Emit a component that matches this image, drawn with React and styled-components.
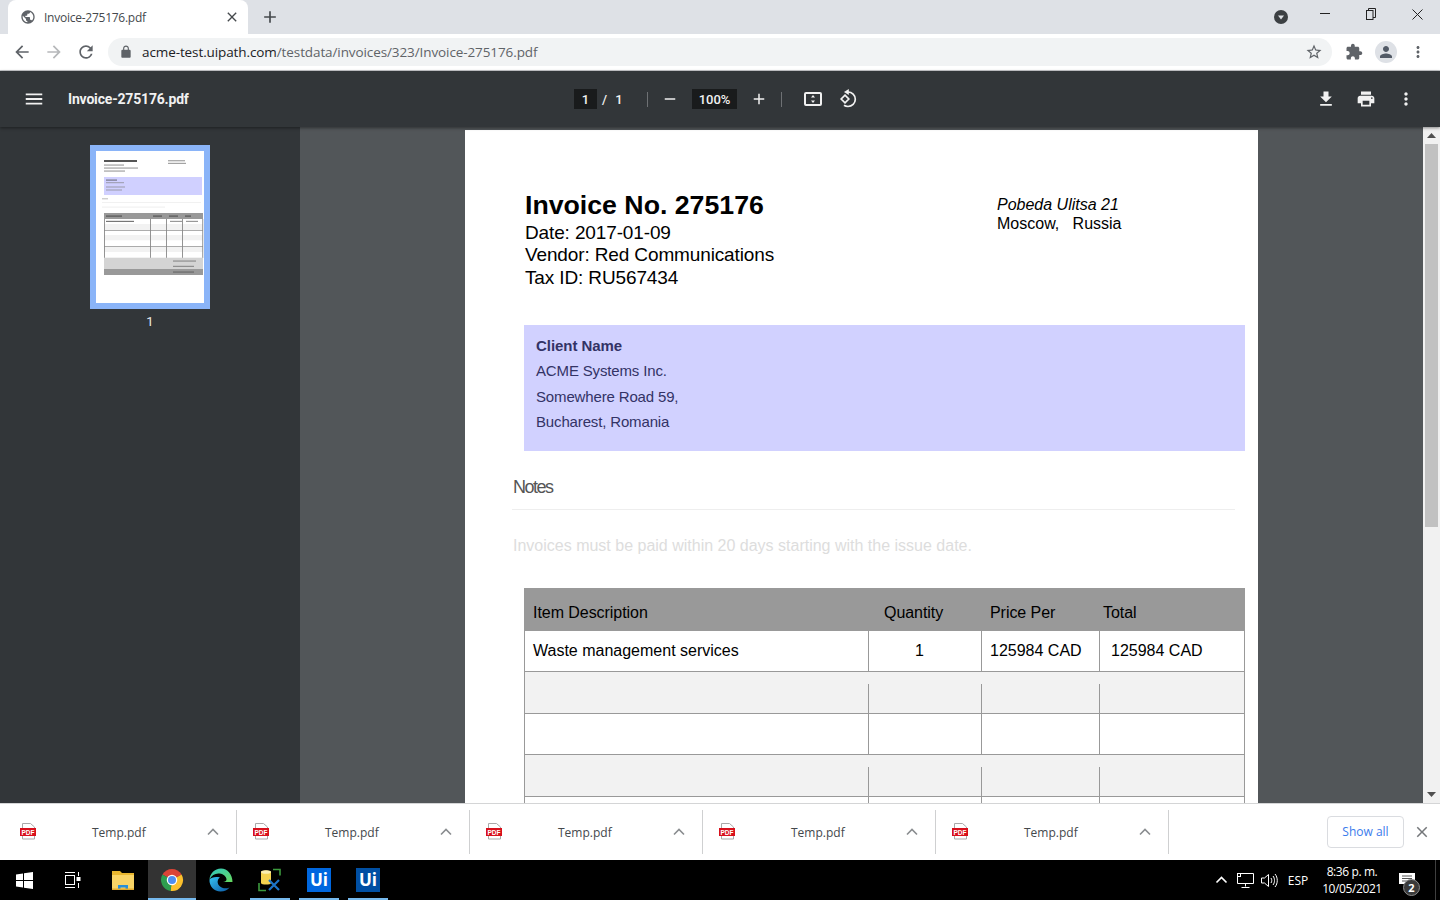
import React from 'react'
import styled, { createGlobalStyle } from 'styled-components'

const GlobalStyle = createGlobalStyle`
  html, body { margin: 0; padding: 0; background: #fff; }
  * { box-sizing: border-box; }
  svg { flex: none; }
`

const Screen = styled.div`
  width: 1440px;
  height: 900px;
  display: flex;
  flex-direction: column;
  overflow: hidden;
  font-family: "Open Sans", "Noto Sans", sans-serif;
`

/* browser chrome */
const TabStrip = styled.div`
  height: 34px;
  flex: none;
  background: #dee1e6;
  display: flex;
  padding-left: 8px;
`
const Tab = styled.div`
  width: 240px;
  height: 34px;
  background: #fff;
  border-radius: 8px 8px 0 0;
  display: flex;
  align-items: center;
  padding: 0 8px 0 12px;
  color: #45494d;
  font-size: 12px;
  letter-spacing: -0.25px;
`
const TabTitle = styled.span`
  flex: 1;
  margin-left: 8px;
`
const NewTab = styled.div`
  width: 44px;
  height: 34px;
  display: flex;
  align-items: center;
  justify-content: center;
`
const WindowControls = styled.div`
  margin-left: auto;
  height: 34px;
  display: flex;
  align-items: center;
`
const ProfileSlot = styled.div`
  width: 24px;
  margin-right: 9px;
  display: flex;
  justify-content: center;
`
const WindowButton = styled.div`
  width: 46px;
  height: 34px;
  display: flex;
  align-items: center;
  justify-content: center;
  padding-bottom: 6px;
`
const AddressRow = styled.div`
  height: 37px;
  flex: none;
  background: #fff;
  display: flex;
  align-items: center;
  border-bottom: 1px solid #c9cbce;
  padding-bottom: 1px;
`
const NavButton = styled.div`
  width: 32px;
  height: 32px;
  display: flex;
  align-items: center;
  justify-content: center;
`
const NavGroup = styled.div`
  width: 108px;
  display: flex;
  padding-left: 6px;
`
const Omnibox = styled.div`
  width: 1224px;
  height: 28px;
  margin-right: 6px;
  background: #f1f3f4;
  border-radius: 14px;
  display: flex;
  align-items: center;
  padding: 0 9px 0 11px;
  font-size: 13.5px;
  letter-spacing: -0.1px;
  color: #5f6368;
`
const Host = styled.span`
  color: #202124;
`
const UrlText = styled.span`
  flex: 1;
  margin-left: 9px;
`
const AvatarDot = styled.div`
  width: 22px;
  height: 22px;
  border-radius: 50%;
  background: #dee1e6;
  display: flex;
  align-items: center;
  justify-content: center;
`

/* pdf viewer */
const PdfBar = styled.div`
  height: 56px;
  flex: none;
  background: #323639;
  color: #f1f1f1;
  display: flex;
  align-items: center;
  box-shadow: 0 1px 3px rgba(0, 0, 0, 0.45);
  position: relative;
  z-index: 2;
`
const BarLeft = styled.div`
  width: 574px;
  display: flex;
  align-items: center;
  padding-left: 23px;
`
const DocName = styled.span`
  margin-left: 23px;
  font-family: Roboto, sans-serif;
  font-weight: 700;
  font-size: 14px;
  letter-spacing: -0.18px;
`
const BarInput = styled.span`
  width: ${p => p.$w}px;
  height: 20px;
  background: #191b1c;
  display: flex;
  align-items: center;
  justify-content: center;
  font-family: Roboto, sans-serif;
  font-size: 13px;
  font-weight: 500;
`
const PageOf = styled.span`
  width: 50px;
  padding-left: 5px;
  font-family: Roboto, sans-serif;
  font-size: 13px;
  font-weight: 500;
  word-spacing: 5px;
`
const BarSep = styled.span`
  width: 1px;
  height: 15px;
  background: #6e7174;
  margin-right: ${p => p.$mr || 0}px;
`
const BarIcon = styled.div`
  width: ${p => p.$w || 40}px;
  display: flex;
  align-items: center;
  justify-content: center;
`
const BarRight = styled.div`
  margin-left: auto;
  display: flex;
  align-items: center;
  padding-right: 14px;
`
const Body = styled.div`
  flex: 1;
  min-height: 0;
  display: flex;
  background: #525659;
`
const Sidebar = styled.aside`
  width: 300px;
  flex: none;
  background: #323639;
  display: flex;
  flex-direction: column;
  align-items: center;
  padding-top: 18px;
`
const ThumbFrame = styled.div`
  width: 120px;
  height: 164px;
  border: 6px solid #8ab4f8;
  background: #fff;
  overflow: hidden;
  svg { filter: blur(0.35px); }
`
const ThumbLabel = styled.div`
  margin-top: 5px;
  color: #e8eaed;
  font-family: Roboto, sans-serif;
  font-size: 13px;
`
const Viewer = styled.main`
  flex: 1;
  min-width: 0;
  overflow: hidden;
  display: flex;
  justify-content: center;
  padding-top: 3px;
`
const Scrollbar = styled.div`
  width: 17px;
  flex: none;
  background: #f1f1f1;
  display: flex;
  flex-direction: column;
  align-items: center;
`
const ScrollArrow = styled.div`
  height: 17px;
  flex: none;
  display: flex;
  align-items: center;
  justify-content: center;
`
const ScrollThumb = styled.div`
  width: 13px;
  height: 383px;
  background: #c1c1c1;
  margin-bottom: auto;
`

/* document */
const Page = styled.article`
  width: 793px;
  height: 760px;
  flex: none;
  background: #fff;
  padding: 59px 13px 0 47px;
  color: #000;
  font-family: "Liberation Sans", Arial, sans-serif;
  overflow: hidden;
`
const HeaderRow = styled.header`
  height: 136px;
  display: flex;
  padding-left: 13px;
`
const InvoiceInfo = styled.div`
  width: 472px;
  font-size: 19px;
  line-height: 22.5px;
`
const InvoiceTitle = styled.h1`
  margin: 0;
  font-size: 26.7px;
  line-height: 32.5px;
  font-weight: 700;
`
const InfoLine = styled.div`
  letter-spacing: -0.13px;
`
const VendorAddress = styled.address`
  font-size: 16px;
  line-height: 19px;
  padding-top: 6px;
  font-style: normal;
`
const Street = styled.div`
  font-style: italic;
`
const ClientBox = styled.section`
  margin-left: 12px;
  width: 721px;
  height: 126px;
  background: #d1d1ff;
  padding: 8px 12px;
  color: #333366;
  font-size: 15px;
  line-height: 25.4px;
  letter-spacing: -0.15px;
`
const ClientName = styled.div`
  font-weight: 700;
  letter-spacing: -0.05px;
`
const NotesTitle = styled.h2`
  margin: 24px 0 0;
  height: 35px;
  width: 723px;
  padding-left: 1px;
  border-bottom: 1px solid #eeeeee;
  font-size: 18px;
  line-height: 24px;
  font-weight: 400;
  color: #555555;
  letter-spacing: -1.5px;
`
const NotesText = styled.p`
  margin: 0;
  height: 78px;
  padding: 26px 0 0 1px;
  color: #dddddd;
  font-size: 16px;
  line-height: 19px;
`
const ItemTable = styled.div`
  margin-left: 12px;
  width: 721px;
`
const TableRow = styled.div`
  display: grid;
  grid-template-columns: 344px 113px 118px 146px;
  height: ${p => p.$h}px;
  background: ${p => p.$bg || '#fff'};
  border-bottom: ${p => (p.$head ? 'none' : '1px solid #999')};
  border-right: ${p => (p.$head ? 'none' : '1px solid #999')};
  border-left: ${p => (p.$head ? 'none' : '1px solid #999')};
`
const HeadCell = styled.div`
  font-size: 16px;
  line-height: 50px;
  padding-left: ${p => p.$pad}px;
  letter-spacing: -0.05px;
`
const Cell = styled.div`
  margin-top: ${p => p.$gap || 0}px;
  border-right: ${p => (p.$last ? 'none' : '1px solid #999')};
  font-size: 16px;
  line-height: 40px;
  padding-left: ${p => p.$pad || 0}px;
  letter-spacing: 0;
`

/* downloads shelf */
const Shelf = styled.div`
  height: 57px;
  flex: none;
  background: #fff;
  border-top: 1px solid #d4d5d6;
  display: flex;
  align-items: center;
  padding-bottom: 1px;
`
const ShelfItem = styled.div`
  width: 233px;
  height: 44px;
  flex: none;
  display: flex;
  align-items: center;
  padding-left: 16px;
  border-right: 1px solid #cfd0d1;
  font-size: 12px;
  color: #44484c;
  &:first-child {
    width: 237px;
    padding-left: 20px;
  }
`
const ShelfName = styled.span`
  margin: 2px 0 0 55px;
  width: 115px;
`
const ShowAll = styled.div`
  margin-left: auto;
  width: 77px;
  height: 32px;
  border: 1px solid #dadce0;
  border-radius: 4px;
  color: #3b7cec;
  font-size: 12px;
  display: flex;
  align-items: center;
  justify-content: center;
`
const ShelfClose = styled.div`
  width: 36px;
  display: flex;
  justify-content: center;
`

/* windows taskbar */
const Taskbar = styled.div`
  height: 40px;
  flex: none;
  background: #000;
  color: #fff;
  display: flex;
  align-items: center;
`
const TaskButton = styled.div`
  width: ${p => p.$w || 49}px;
  height: 40px;
  margin-left: ${p => p.$ml || 0}px;
  padding-top: 2px;
  display: flex;
  align-items: center;
  justify-content: center;
  background: ${p => (p.$active ? '#333' : 'transparent')};
  border-bottom: 2px solid ${p => (p.$open ? '#76b9ed' : 'transparent')};
`
const Tray = styled.div`
  margin-left: auto;
  display: flex;
  align-items: center;
  height: 40px;
`
const TrayIcon = styled.div`
  width: 24px;
  display: flex;
  justify-content: center;
  align-items: center;
`
const TrayLang = styled.div`
  width: 31px;
  padding-left: 3px;
  text-align: center;
  font-size: 12px;
`
const Clock = styled.div`
  width: 80px;
  text-align: center;
  font-size: 12px;
  line-height: 17px;
  letter-spacing: -0.4px;
`
const NotifyButton = styled.div`
  width: 43px;
  height: 40px;
  position: relative;
  display: flex;
  align-items: center;
  padding-left: 7px;
`
const NotifyBadge = styled.span`
  position: absolute;
  left: 11px;
  top: 19px;
  width: 17px;
  height: 17px;
  border-radius: 50%;
  background: #3a3a3a;
  border: 1px solid #8a8a8a;
  font-size: 11px;
  font-weight: 700;
  line-height: 15px;
  text-align: center;
`
const ShowDesktop = styled.div`
  width: 5px;
  height: 40px;
  border-left: 1px solid #3f3f3f;
`
const UiTile = styled.div`
  width: 24px;
  height: 24px;
  background: ${p => p.$bg};
  color: #fff;
  font-family: "Open Sans", sans-serif;
  font-size: 17px;
  font-weight: 700;
  line-height: 24px;
  text-align: center;
`

const Icon = ({ d, size = 24, color = '#5f6368', flip }) => (
  <svg width={size} height={size} viewBox="0 0 24 24" style={flip ? { transform: 'scaleX(-1)' } : undefined}>
    <path d={d} fill={color} />
  </svg>
)

const paths = {
  globe: 'M12 2C6.48 2 2 6.48 2 12s4.48 10 10 10 10-4.48 10-10S17.52 2 12 2zm-1 17.93c-3.95-.49-7-3.85-7-7.93 0-.62.08-1.21.21-1.79L9 15v1c0 1.1.9 2 2 2v1.93zm6.9-2.54c-.26-.81-1-1.39-1.9-1.39h-1v-3c0-.55-.45-1-1-1H8v-2h2c.55 0 1-.45 1-1V7h2c1.1 0 2-.9 2-2v-.41c2.93 1.19 5 4.06 5 7.41 0 2.08-.8 3.97-2.1 5.39z',
  back: 'M20 11H7.83l5.59-5.59L12 4l-8 8 8 8 1.41-1.41L7.83 13H20v-2z',
  reload: 'M17.65 6.35A7.958 7.958 0 0012 4c-4.42 0-7.99 3.58-7.99 8s3.57 8 7.99 8c3.73 0 6.84-2.55 7.73-6h-2.08A5.99 5.99 0 0112 18c-3.31 0-6-2.69-6-6s2.69-6 6-6c1.66 0 3.14.69 4.22 1.78L13 11h7V4l-2.35 2.35z',
  lock: 'M18 8h-1V6c0-2.76-2.24-5-5-5S7 3.24 7 6v2H6c-1.1 0-2 .9-2 2v10c0 1.1.9 2 2 2h12c1.1 0 2-.9 2-2V10c0-1.1-.9-2-2-2zM9 6c0-1.66 1.34-3 3-3s3 1.34 3 3v2H9V6z',
  star: 'M22 9.24l-7.19-.62L12 2 9.19 8.63 2 9.24l5.46 4.73L5.82 21 12 17.27 18.18 21l-1.63-7.03L22 9.24zM12 15.4l-3.76 2.27 1-4.28-3.32-2.88 4.38-.38L12 6.1l1.71 4.04 4.38.38-3.32 2.88 1 4.28L12 15.4z',
  puzzle: 'M20.5 11H19V7c0-1.1-.9-2-2-2h-4V3.5C13 2.12 11.88 1 10.5 1S8 2.12 8 3.5V5H4c-1.1 0-1.99.9-1.99 2v3.8H3.5c1.49 0 2.7 1.21 2.7 2.7s-1.21 2.7-2.7 2.7H2V20c0 1.1.9 2 2 2h3.8v-1.5c0-1.49 1.21-2.7 2.7-2.7 1.49 0 2.7 1.21 2.7 2.7V22H17c1.1 0 2-.9 2-2v-4h1.5c1.38 0 2.5-1.12 2.5-2.5S21.88 11 20.5 11z',
  person: 'M12 12c2.21 0 4-1.79 4-4s-1.79-4-4-4-4 1.79-4 4 1.79 4 4 4zm0 2c-2.67 0-8 1.34-8 4v2h16v-2c0-2.66-5.33-4-8-4z',
  more: 'M12 8c1.1 0 2-.9 2-2s-.9-2-2-2-2 .9-2 2 .9 2 2 2zm0 2c-1.1 0-2 .9-2 2s.9 2 2 2 2-.9 2-2-.9-2-2-2zm0 6c-1.1 0-2 .9-2 2s.9 2 2 2 2-.9 2-2-.9-2-2-2z',
  download: 'M19 9h-4V3H9v6H5l7 7 7-7zM5 18v2h14v-2H5z',
  print: 'M19 8H5c-1.66 0-3 1.34-3 3v6h4v4h12v-4h4v-6c0-1.66-1.34-3-3-3zm-3 11H8v-5h8v5zm3-7c-.55 0-1-.45-1-1s.45-1 1-1 1 .45 1 1-.45 1-1 1zm-1-9H6v4h12V3z',
  close: 'M19 6.41L17.59 5 12 10.59 6.41 5 5 6.41 10.59 12 5 17.59 6.41 19 12 13.41 17.59 19 19 17.59 13.41 12z',
  plus: 'M19 13h-6v6h-2v-6H5v-2h6V5h2v6h6v2z',
  minus: 'M19 13H5v-2h14v2z',
  menu: 'M3 18h18v-2H3v2zm0-5h18v-2H3v2zm0-7v2h18V6H3z',
}

const FitIcon = () => (
  <svg width="18" height="14" viewBox="0 0 18 14" fill="none">
    <rect x="1" y="1" width="16" height="12" rx="1" stroke="#f1f1f1" strokeWidth="2" />
    <path d="M9 3l2 2.500H7zM9 11L7 8.500h4z" fill="#f1f1f1" />
  </svg>
)

const RotateIcon = () => (
  <svg width="20" height="20" viewBox="0 0 20 20" fill="none">
    <path d="M6 6.200L9.800 10 6 13.800 2.200 10z" stroke="#f1f1f1" strokeWidth="1.700" />
    <path d="M9 3c4 0 7.300 3 7.300 7.200S13 17.500 9 17.500c-1.500 0-2.800-.4-4-1.300" stroke="#f1f1f1" strokeWidth="1.700" />
    <path d="M9.800 0v6L5 3z" fill="#f1f1f1" />
  </svg>
)

const Thumbnail = () => (
  <svg width="108" height="152" viewBox="0 0 108 152">
    <rect x="8" y="9" width="33" height="2" fill="#555" />
    <rect x="8" y="13.500" width="20" height="1.100" fill="#999" />
    <rect x="8" y="16.500" width="34" height="1.100" fill="#999" />
    <rect x="8" y="19.500" width="21" height="1.100" fill="#999" />
    <rect x="72" y="9.200" width="17" height="1.100" fill="#999" />
    <rect x="72" y="11.800" width="18" height="1.100" fill="#999" />
    <rect x="8" y="26" width="98" height="18" fill="#d0d0ff" />
    <rect x="10" y="28.500" width="11" height="1.200" fill="#778" />
    <rect x="10" y="31.200" width="18" height="1" fill="#99a" />
    <rect x="10" y="35.500" width="19" height="1" fill="#99a" />
    <rect x="10" y="38.500" width="16" height="1" fill="#99a" />
    <rect x="6" y="47.300" width="6" height="1" fill="#bbb" />
    <rect x="6" y="51" width="99" height=".8" fill="#eee" />
    <rect x="6" y="55.600" width="63" height="1" fill="#eee" />
    <rect x="8" y="62" width="99" height="6" fill="#999" />
    <rect x="10" y="64.500" width="16" height="1.200" fill="#555" />
    <rect x="57" y="64.500" width="9" height="1.200" fill="#555" />
    <rect x="73" y="64.500" width="9" height="1.200" fill="#555" />
    <rect x="89" y="64.500" width="6" height="1.200" fill="#555" />
    <rect x="10" y="69.800" width="28" height="1.200" fill="#777" />
    <rect x="74" y="69.800" width="12" height="1.200" fill="#999" />
    <rect x="90" y="69.800" width="12" height="1.200" fill="#999" />
    <rect x="8" y="73" width="99" height="6" fill="#f2f2f2" />
    <rect x="8" y="84" width="99" height="5.300" fill="#f2f2f2" />
    <rect x="8" y="95.500" width="99" height="5.500" fill="#f2f2f2" />
    <rect x="8" y="79" width="99" height=".8" fill="#999" />
    <rect x="8" y="95" width="99" height=".8" fill="#999" />
    {[8, 54, 70, 86, 106.300].map(x => <rect key={x} x={x} y="68" width=".9" height="39" fill="#888" />)}
    <rect x="8" y="106.700" width="99" height="11.300" fill="#d4d4d4" />
    <rect x="8" y="118" width="99" height="6" fill="#999" />
    <rect x="77" y="109.500" width="23" height="1.100" fill="#888" />
    <rect x="77" y="114.800" width="21" height="1.100" fill="#888" />
    <rect x="77" y="120.500" width="21" height="1.100" fill="#666" />
  </svg>
)

const PdfFileIcon = () => (
  <svg width="17" height="17" viewBox="0 0 17 17">
    <path d="M2.500.5h8l4 3.500v12h-12z" fill="#fff" stroke="#a9a9a9" />
    <rect x="0" y="5" width="16" height="8" fill="#d8101c" />
    <text x="8" y="11.600" fontSize="6.500" fontWeight="700" fontFamily="Liberation Sans, sans-serif" fill="#fff" textAnchor="middle">PDF</text>
  </svg>
)

const Chevron = ({ color = '#8a8d90', w = 12, h = 8 }) => (
  <svg width={w} height={h} viewBox="0 0 12 8" fill="none">
    <path d="M1 6.500l5-5 5 5" stroke={color} strokeWidth="1.600" />
  </svg>
)

const WindowsLogo = () => (
  <svg width="17" height="17" viewBox="0 0 17 17">
    <path d="M0 2.400l7-1V8H0zM8 1.300L17 0v8H8zM0 9h7v6.600l-7-1zM8 9h9v8l-9-1.300z" fill="#fff" />
  </svg>
)

const TaskView = () => (
  <svg width="17" height="16" viewBox="0 0 17 16" fill="none" stroke="#fff">
    <path d="M1 .5h10M1 15.500h10" />
    <rect x="1.500" y="3.500" width="9" height="9" />
    <path d="M14.500 0v4M14.500 11v5" />
    <rect x="13" y="5.500" width="3" height="3" fill="#fff" />
  </svg>
)

const FolderIcon = () => (
  <svg width="22" height="20" viewBox="0 0 22 20">
    <path d="M0 1h8l2 2h12v3H0z" fill="#e8b62f" />
    <rect x="0" y="5" width="22" height="15" fill="#f9d466" />
    <path d="M6 20v-5h10v5h-2.500v-2.500h-5V20z" fill="#2a8fd8" />
    <rect x="0" y="18.500" width="22" height="1.500" fill="#e3a92c" />
  </svg>
)

const ChromeLogo = () => (
  <svg width="24" height="24" viewBox="0 0 48 48">
    <path d="M24 24L4.950 13A22 22 0 0 1 43.050 13z" fill="#db4437" />
    <path d="M24 24L43.050 13A22 22 0 0 1 21 45.800z" fill="#fbc02d" />
    <path d="M24 24L21 45.800A22 22 0 0 1 4.950 13z" fill="#2e9e4f" />
    <circle cx="24" cy="24" r="10.500" fill="#fff" />
    <circle cx="24" cy="24" r="8" fill="#4f8ef0" />
  </svg>
)

const EdgeLogo = () => (
  <svg width="24" height="24" viewBox="0 0 48 48">
    <defs>
      <linearGradient id="edgeA" x1="0" y1="0" x2="1" y2="1">
        <stop offset="0" stopColor="#35c1f1" />
        <stop offset="1" stopColor="#0c59a4" />
      </linearGradient>
      <linearGradient id="edgeB" x1="0" y1="0" x2="1" y2="1">
        <stop offset="0" stopColor="#2fc7c0" />
        <stop offset="1" stopColor="#66d85e" />
      </linearGradient>
    </defs>
    <path d="M24 1C11 1 2 11 1 23c4-9 12-13 20-12 9 1 14 7 14 12 0 3-3 5-7 5h19c0-15-10-27-23-27z" fill="url(#edgeB)" />
    <path d="M1 23c-1 13 9 24 22 24 8 0 14-3 18-8-7 3-15 2-20-3s-5-13 1-17c-9-2-18 0-21 4z" fill="url(#edgeA)" />
  </svg>
)

const SqlToolIcon = () => (
  <svg width="24" height="24" viewBox="0 0 24 24" fill="none">
    <path d="M3 4c0-2 10-2 10 0v11c0 2-10 2-10 0z" fill="#f5d24f" />
    <ellipse cx="8" cy="4" rx="5" ry="1.800" fill="#fbeeb0" />
    <path d="M15 1.500h7v6M1 15v7.500h7" stroke="#3c9a3e" strokeWidth="1.600" />
    <path d="M11 12l10 10M21 12L11 22" stroke="#1c74c8" strokeWidth="2.200" />
  </svg>
)

const NetworkIcon = () => (
  <svg width="17" height="15" viewBox="0 0 17 15" fill="none" stroke="#fff">
    <path d="M3.500.5h13v10h-16V4" />
    <rect x=".5" y=".5" width="3" height="3" />
    <path d="M8.500 10.500v3M4.500 14.500h8" />
  </svg>
)

const VolumeIcon = () => (
  <svg width="17" height="15" viewBox="0 0 17 15" fill="none" stroke="#fff">
    <path d="M.5 5h3L7.500 1.500v12L3.500 10h-3z" />
    <path d="M10 5c1 1.500 1 3.500 0 5M12 3c2 2.500 2 6.500 0 9M14 1c3 3.500 3 9.500 0 13" />
  </svg>
)

const BubbleIcon = () => (
  <svg width="16" height="15" viewBox="0 0 16 15">
    <path d="M0 0h16v11H9l-3 4v-4H0z" fill="#fff" />
    <path d="M3 3h10M3 5.500h10M3 8h7" stroke="#555" />
  </svg>
)

const WinMinimize = () => <svg width="10" height="2"><rect width="10" height="1" fill="#222" /></svg>
const WinRestore = () => (
  <svg width="10" height="12" viewBox="0 0 10 12" fill="none" stroke="#222">
    <rect x=".5" y="2.500" width="6.500" height="9" />
    <path d="M2.500 2.500V.5h7v9H7" />
  </svg>
)
const WinClose = () => (
  <svg width="11" height="11" viewBox="0 0 11 11" fill="none" stroke="#222">
    <path d="M.5.5l10 10M10.500.5l-10 10" />
  </svg>
)

const ProfileDrop = () => (
  <svg width="14" height="14" viewBox="0 0 14 14">
    <circle cx="7" cy="7" r="7" fill="#3c4043" />
    <path d="M4 5.500h6L7 9.500z" fill="#dee1e6" />
  </svg>
)

const rows = [
  { h: 42, bg: '#f2f2f2', gap: 12 },
  { h: 41, bg: '#fff', gap: 0 },
  { h: 42, bg: '#f2f2f2', gap: 12 },
  { h: 41, bg: '#fff', gap: 0 },
]

const App = () => {
  return (
    <Screen>
      <GlobalStyle />
      <TabStrip>
        <Tab>
          <Icon d={paths.globe} size={16} color="#5f6368" />
          <TabTitle>Invoice-275176.pdf</TabTitle>
          <Icon d={paths.close} size={16} color="#45494d" />
        </Tab>
        <NewTab><Icon d={paths.plus} size={20} color="#45494d" /></NewTab>
        <WindowControls>
          <ProfileSlot><ProfileDrop /></ProfileSlot>
          <WindowButton><WinMinimize /></WindowButton>
          <WindowButton><WinRestore /></WindowButton>
          <WindowButton><WinClose /></WindowButton>
        </WindowControls>
      </TabStrip>

      <AddressRow>
        <NavGroup>
          <NavButton><Icon d={paths.back} size={20} /></NavButton>
          <NavButton><Icon d={paths.back} size={20} color="#b6b8ba" flip /></NavButton>
          <NavButton><Icon d={paths.reload} size={20} /></NavButton>
        </NavGroup>
        <Omnibox>
          <Icon d={paths.lock} size={14} color="#5f6368" />
          <UrlText><Host>acme-test.uipath.com</Host>/testdata/invoices/323/Invoice-275176.pdf</UrlText>
          <Icon d={paths.star} size={18} />
        </Omnibox>
        <NavButton><Icon d={paths.puzzle} size={18} /></NavButton>
        <NavButton><AvatarDot><Icon d={paths.person} size={18} color="#525a66" /></AvatarDot></NavButton>
        <NavButton><Icon d={paths.more} size={18} /></NavButton>
      </AddressRow>

      <PdfBar>
        <BarLeft>
          <Icon d={paths.menu} size={22} color="#f1f1f1" />
          <DocName>Invoice-275176.pdf</DocName>
        </BarLeft>
        <BarInput $w={23}>1</BarInput>
        <PageOf>/ 1</PageOf>
        <BarSep />
        <BarIcon $w={44}><Icon d={paths.minus} size={18} color="#f1f1f1" /></BarIcon>
        <BarInput $w={45}>100%</BarInput>
        <BarIcon $w={44}><Icon d={paths.plus} size={18} color="#f1f1f1" /></BarIcon>
        <BarSep $mr={12} />
        <BarIcon $w={37}><FitIcon /></BarIcon>
        <BarIcon $w={36}><RotateIcon /></BarIcon>
        <BarRight>
          <BarIcon><Icon d={paths.download} size={20} color="#f1f1f1" /></BarIcon>
          <BarIcon><Icon d={paths.print} size={20} color="#f1f1f1" /></BarIcon>
          <BarIcon><Icon d={paths.more} size={20} color="#f1f1f1" /></BarIcon>
        </BarRight>
      </PdfBar>

      <Body>
        <Sidebar>
          <ThumbFrame><Thumbnail /></ThumbFrame>
          <ThumbLabel>1</ThumbLabel>
        </Sidebar>
        <Viewer>
          <Page>
            <HeaderRow>
              <InvoiceInfo>
                <InvoiceTitle>Invoice No. 275176</InvoiceTitle>
                <InfoLine>Date: 2017-01-09</InfoLine>
                <InfoLine>Vendor: Red Communications</InfoLine>
                <InfoLine>Tax ID: RU567434</InfoLine>
              </InvoiceInfo>
              <VendorAddress>
                <Street>Pobeda Ulitsa 21</Street>
                <div>Moscow,&nbsp;&nbsp; Russia</div>
              </VendorAddress>
            </HeaderRow>
            <ClientBox>
              <ClientName>Client Name</ClientName>
              <div>ACME Systems Inc.</div>
              <div>Somewhere Road 59,</div>
              <div>Bucharest, Romania</div>
            </ClientBox>
            <NotesTitle>Notes</NotesTitle>
            <NotesText>Invoices must be paid within 20 days starting with the issue date.</NotesText>
            <ItemTable>
              <TableRow $h={43} $bg="#999999" $head>
                <HeadCell $pad={9}>Item Description</HeadCell>
                <HeadCell $pad={16}>Quantity</HeadCell>
                <HeadCell $pad={9}>Price Per</HeadCell>
                <HeadCell $pad={4}>Total</HeadCell>
              </TableRow>
              <TableRow $h={41}>
                <Cell $pad={8}>Waste management services</Cell>
                <Cell $pad={46}>1</Cell>
                <Cell $pad={8}>125984 CAD</Cell>
                <Cell $pad={11} $last>125984 CAD</Cell>
              </TableRow>
              {rows.map((row, index) => (
                <TableRow key={index} $h={row.h} $bg={row.bg}>
                  <Cell $gap={row.gap} />
                  <Cell $gap={row.gap} />
                  <Cell $gap={row.gap} />
                  <Cell $gap={row.gap} $last />
                </TableRow>
              ))}
            </ItemTable>
          </Page>
        </Viewer>
        <Scrollbar>
          <ScrollArrow><svg width="9" height="5"><path d="M4.500 0L9 5H0z" fill="#505050" /></svg></ScrollArrow>
          <ScrollThumb />
          <ScrollArrow><svg width="9" height="5"><path d="M0 0h9L4.500 5z" fill="#505050" /></svg></ScrollArrow>
        </Scrollbar>
      </Body>

      <Shelf>
        {[0, 1, 2, 3, 4].map(i => (
          <ShelfItem key={i}>
            <PdfFileIcon />
            <ShelfName>Temp.pdf</ShelfName>
            <Chevron />
          </ShelfItem>
        ))}
        <ShowAll>Show all</ShowAll>
        <ShelfClose><Icon d={paths.close} size={18} color="#74777a" /></ShelfClose>
      </Shelf>

      <Taskbar>
        <TaskButton $w={48}><WindowsLogo /></TaskButton>
        <TaskButton><TaskView /></TaskButton>
        <TaskButton $w={51}><FolderIcon /></TaskButton>
        <TaskButton $w={48} $active $open><ChromeLogo /></TaskButton>
        <TaskButton $w={49}><EdgeLogo /></TaskButton>
        <TaskButton $w={40} $ml={5} $open><SqlToolIcon /></TaskButton>
        <TaskButton $w={40} $ml={9} $open><UiTile $bg="#0067df">Ui</UiTile></TaskButton>
        <TaskButton $w={40} $ml={9} $open><UiTile $bg="#004fa3">Ui</UiTile></TaskButton>
        <Tray>
          <TrayIcon><Chevron color="#fff" w={13} h={8} /></TrayIcon>
          <TrayIcon><NetworkIcon /></TrayIcon>
          <TrayIcon><VolumeIcon /></TrayIcon>
          <TrayLang>ESP</TrayLang>
          <Clock>
            <div>8:36 p. m.</div>
            <div>10/05/2021</div>
          </Clock>
          <NotifyButton>
            <BubbleIcon />
            <NotifyBadge>2</NotifyBadge>
          </NotifyButton>
          <ShowDesktop />
        </Tray>
      </Taskbar>
    </Screen>
  )
}

export default App
